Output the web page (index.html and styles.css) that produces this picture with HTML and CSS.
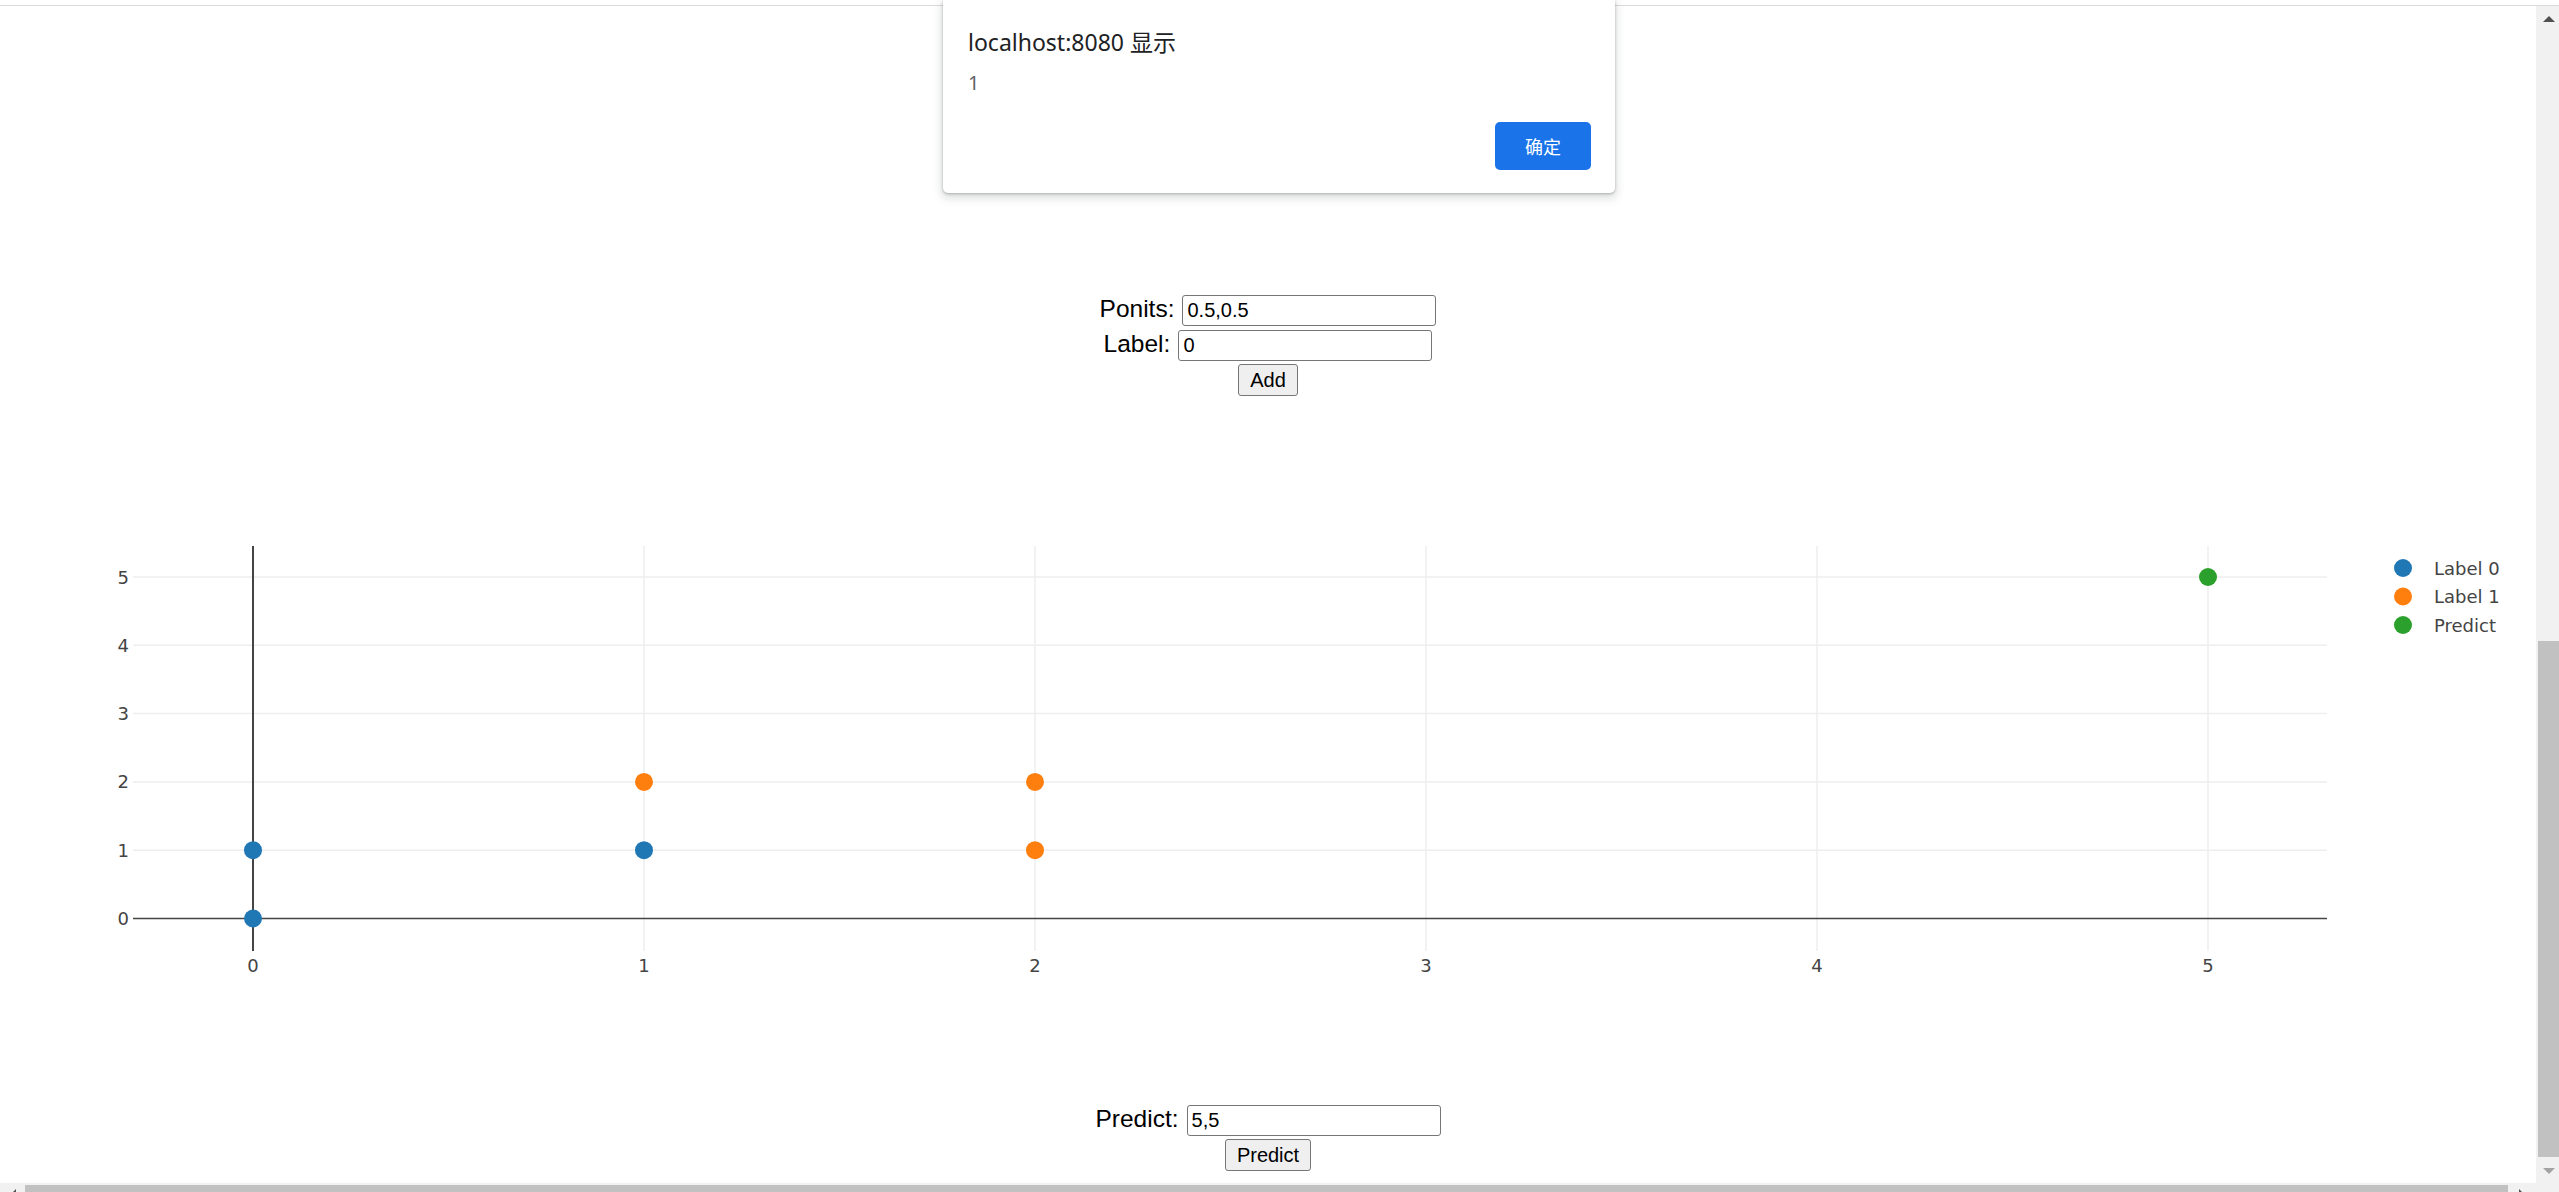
FILE: index.html
```html
<!DOCTYPE html>
<html lang="zh-CN">
<head>
<meta charset="utf-8">
<title>KNN</title>
<link rel="stylesheet" href="styles.css">
</head>
<body>
<div class="window">
  <div class="chrome-edge"></div>
  <div class="viewport">
    <main class="page">
      <form class="entry">
        <div class="row row-a"><label class="lbl">Ponits:</label><input class="field" type="text" value="0.5,0.5"></div>
        <div class="row row-b"><label class="lbl">Label:</label><input class="field" type="text" value="0"></div>
        <div class="row row-c"><button class="btn" type="button">Add</button></div>
      </form>
      <div class="chart">
        <svg class="plot" width="2536" height="674" viewBox="0 0 2536 674">
          <g class="grid">
            <line x1="644" y1="150" x2="644" y2="555"/>
            <line x1="1035" y1="150" x2="1035" y2="555"/>
            <line x1="1426" y1="150" x2="1426" y2="555"/>
            <line x1="1817" y1="150" x2="1817" y2="555"/>
            <line x1="2208" y1="150" x2="2208" y2="555"/>
            <line x1="133" y1="454.2" x2="2327" y2="454.2"/>
            <line x1="133" y1="385.9" x2="2327" y2="385.9"/>
            <line x1="133" y1="317.6" x2="2327" y2="317.6"/>
            <line x1="133" y1="249.3" x2="2327" y2="249.3"/>
            <line x1="133" y1="181" x2="2327" y2="181"/>
          </g>
          <g class="zero">
            <line class="zero-h" x1="133" y1="522.5" x2="2327" y2="522.5"/>
            <line class="zero-v" x1="253" y1="150" x2="253" y2="555"/>
          </g>
          <g class="ticks">
            <text class="ytick" x="129" y="529">0</text>
            <text class="ytick" x="129" y="460.7">1</text>
            <text class="ytick" x="129" y="392.4">2</text>
            <text class="ytick" x="129" y="324.1">3</text>
            <text class="ytick" x="129" y="255.8">4</text>
            <text class="ytick" x="129" y="187.5">5</text>
            <text class="xtick" x="253" y="575.5">0</text>
            <text class="xtick" x="644" y="575.5">1</text>
            <text class="xtick" x="1035" y="575.5">2</text>
            <text class="xtick" x="1426" y="575.5">3</text>
            <text class="xtick" x="1817" y="575.5">4</text>
            <text class="xtick" x="2208" y="575.5">5</text>
          </g>
          <g class="pts">
            <circle class="c0" cx="253" cy="522.5" r="9"/>
            <circle class="c0" cx="253" cy="454.2" r="9"/>
            <circle class="c0" cx="644" cy="454.2" r="9"/>
            <circle class="c1" cx="644" cy="385.9" r="9"/>
            <circle class="c1" cx="1035" cy="385.9" r="9"/>
            <circle class="c1" cx="1035" cy="454.2" r="9"/>
            <circle class="c2" cx="2208" cy="181" r="9"/>
          </g>
          <g class="legend">
            <circle class="c0" cx="2403" cy="172" r="9"/>
            <text x="2434" y="178.5">Label 0</text>
            <circle class="c1" cx="2403" cy="200.5" r="9"/>
            <text x="2434" y="207">Label 1</text>
            <circle class="c2" cx="2403" cy="229" r="9"/>
            <text x="2434" y="235.5">Predict</text>
          </g>
        </svg>
      </div>
      <div class="entry predict">
        <div class="row row-b"><label class="lbl">Predict:</label><input class="field" type="text" value="5,5"></div>
        <div class="row row-c"><button class="btn" type="button">Predict</button></div>
      </div>
    </main>
    <div class="vscroll">
      <div class="sb-btn"><span class="tri-up"></span></div>
      <div class="vtrack"><div class="vthumb"></div></div>
      <div class="sb-btn"><span class="tri-down"></span></div>
    </div>
  </div>
  <div class="hscroll">
    <div class="hs-btn"><span class="tri-left"></span></div>
    <div class="htrack"><div class="hthumb"></div></div>
    <div class="hs-btn hs-right"><span class="tri-right"></span></div>
    <div class="corner"></div>
  </div>

  <div class="dialog" role="alertdialog">
    <div class="dlg-title">localhost:8080 显示</div>
    <div class="dlg-msg">1</div>
    <div class="dlg-actions"><button class="dlg-ok" type="button">确定</button></div>
  </div>
</div>
</body>
</html>
```

FILE: styles.css
```css
* { box-sizing: border-box; }

html, body {
  margin: 0;
  padding: 0;
  background: #ffffff;
}

body {
  width: 2559px;
  height: 1192px;
  overflow: hidden;
  font-family: "Liberation Sans", Arial, sans-serif;
  color: #000;
}

.window {
  position: relative;
  width: 2559px;
  height: 1192px;
  display: flex;
  flex-direction: column;
  overflow: hidden;
}

.chrome-edge {
  flex: none;
  height: 6px;
  border-bottom: 1px solid #dadada;
  background: #ffffff;
}

.viewport {
  flex: none;
  height: 1177px;
  display: flex;
}

.page {
  flex: 1;
  min-width: 0;
  display: flex;
  flex-direction: column;
}

.entry {
  margin: 289px 0 0 0;
  display: flex;
  flex-direction: column;
  align-items: center;
}

.entry.predict {
  margin-top: 35px;
}

.row {
  display: flex;
  align-items: baseline;
  justify-content: center;
  gap: 8px;
}

.row-a { height: 35px; }
.row-b { height: 34px; }
.row-c { height: 32px; }

.lbl {
  font-size: 24.5px;
  line-height: normal;
}

.field {
  width: 254px;
  height: 31px;
  margin: 0;
  padding: 1px 4px;
  border: 1px solid #767676;
  border-radius: 3px;
  font-family: "Liberation Sans", Arial, sans-serif;
  font-size: 20px;
  color: #000;
  background: #fff;
}

.btn {
  height: 32px;
  margin: 0;
  padding: 0 11px;
  border: 1px solid #767676;
  border-radius: 3px;
  background: #efefef;
  font-family: "Liberation Sans", Arial, sans-serif;
  font-size: 20px;
  color: #000;
}

.chart {
  flex: none;
  height: 674px;
}

.plot {
  display: block;
}

.grid line {
  stroke: #eeeeee;
  stroke-width: 1.5;
}

.zero line {
  stroke: #444444;
}

.zero-h { stroke-width: 1.5; }
.zero-v { stroke-width: 2; }

.ticks text,
.legend text {
  font-family: "DejaVu Sans", Verdana, sans-serif;
  font-size: 18px;
  fill: #444444;
}

.ytick { text-anchor: end; }
.xtick { text-anchor: middle; }

.c0 { fill: #1f77b4; }
.c1 { fill: #ff7f0e; }
.c2 { fill: #2ca02c; }

/* scrollbars */
.vscroll {
  flex: none;
  width: 23px;
  background: #f1f1f1;
  display: flex;
  flex-direction: column;
}

.sb-btn {
  flex: none;
  height: 25px;
  display: flex;
  align-items: center;
  justify-content: center;
  padding-left: 2px;
}

.tri-up {
  width: 0;
  height: 0;
  border-left: 6px solid transparent;
  border-right: 6px solid transparent;
  border-bottom: 6px solid #505050;
}

.tri-down {
  width: 0;
  height: 0;
  border-left: 6px solid transparent;
  border-right: 6px solid transparent;
  border-top: 6px solid #a3a3a3;
}

.vtrack {
  flex: 1;
  display: flex;
  flex-direction: column;
}

.vthumb {
  margin-top: 610px;
  margin-left: 2px;
  height: 516px;
  background: #c1c1c1;
}

.hscroll {
  flex: none;
  height: 25px;
  display: flex;
  background: #f1f1f1;
}

.hs-btn {
  flex: none;
  width: 25px;
  display: flex;
  justify-content: center;
  padding-top: 6px;
}

.hs-right {
  width: 28px;
}

.tri-left {
  width: 0;
  height: 0;
  border-top: 6px solid transparent;
  border-bottom: 6px solid transparent;
  border-right: 6px solid #505050;
}

.tri-right {
  width: 0;
  height: 0;
  border-top: 6px solid transparent;
  border-bottom: 6px solid transparent;
  border-left: 6px solid #505050;
}

.htrack {
  flex: 1;
  padding-top: 2px;
}

.hthumb {
  height: 21px;
  background: #c1c1c1;
}

.corner {
  flex: none;
  width: 23px;
  background: #f1f1f1;
}

/* alert dialog */
.dialog {
  position: absolute;
  top: 0;
  left: 943px;
  width: 672px;
  height: 193px;
  padding: 26px 24px 23px 25px;
  background: #ffffff;
  border-radius: 0 0 5px 5px;
  box-shadow: 0 1px 3px rgba(60, 64, 67, 0.35), 0 4px 8px 2px rgba(60, 64, 67, 0.15);
  font-family: "Noto Sans", "Noto Sans CJK SC", sans-serif;
  display: flex;
  flex-direction: column;
}

.dlg-title {
  font-size: 23px;
  line-height: 32px;
  color: #202124;
  font-family: "Noto Sans", "Noto Sans CJK SC", sans-serif;
}

.dlg-msg {
  margin-top: 11px;
  font-size: 20px;
  line-height: 28px;
  color: #5f6368;
}

.dlg-actions {
  margin-top: 25px;
  display: flex;
  justify-content: flex-end;
}

.dlg-ok {
  width: 96px;
  height: 48px;
  margin: 0;
  padding: 0;
  border: none;
  border-radius: 5px;
  background: #1a73e8;
  color: #ffffff;
  font-family: "Noto Sans CJK SC", "Noto Sans", sans-serif;
  font-size: 18px;
}
```
